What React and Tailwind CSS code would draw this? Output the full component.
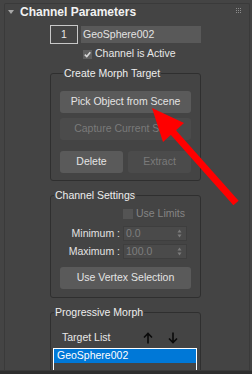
import React from 'react';

// Small shared bits of the 3ds Max style rollout
const Btn = ({ children, disabled, className = '' }) => (
  <div
    className={`h-[22px] rounded-[3px] flex items-center justify-center ${
      disabled ? 'bg-[#4b4b4b] text-[#7a7a7a]' : 'bg-[#5a5a5a] text-[#e4e4e4]'
    } ${className}`}
  >
    {children}
  </div>
);

const Group = ({ label, className = '', children }) => (
  <fieldset className={`border border-[#2f2f2f] rounded-[3px] ${className}`}>
    <legend className="ml-[3px] px-[1px] leading-[14px] text-[#eeeeee]">{label}</legend>
    {children}
  </fieldset>
);

const SpinArrows = () => (
  <svg width="5" height="9" viewBox="0 0 5 9" className="mr-[4px]">
    <path d="M2.5 0.5 L4.5 3.5 H0.5 Z" fill="#7c7c7c" />
    <path d="M2.5 8.5 L4.5 5.5 H0.5 Z" fill="#7c7c7c" />
  </svg>
);

const Spinner = ({ label, value, className = '' }) => (
  <div className={`flex items-center h-[15px] ${className}`}>
    <span className="w-[69px] text-right text-[#e2e2e2]">{label}</span>
    <div className="ml-[3px] w-[64px] h-[15px] bg-[#4a4a4a] border border-[#3e3e3e] flex items-center justify-between">
      <span className="pl-[2px] text-[#7e7e7e]">{value}</span>
      <SpinArrows />
    </div>
  </div>
);

const Grip = () => (
  <svg width="6" height="6" viewBox="0 0 6 6">
    {[0, 2, 4].map((y) =>
      [0, 2, 4].map((x) => <rect key={`${x}-${y}`} x={x} y={y} width="1" height="1" fill="#8c8c8c" />)
    )}
  </svg>
);

export default function App() {
  return (
    <div className="relative w-[252px] h-[374px] bg-[#444444] overflow-hidden flex flex-col font-['Liberation_Sans',Arial,sans-serif] text-[10.5px] text-[#e2e2e2]">
      <div className="flex-1 min-h-0 overflow-hidden pt-[3px]">
        <div className="ml-[4px] w-[246px] h-full border border-b-0 border-[#3a3a3a] rounded-t-[2px]">
          {/* title bar */}
          <div className="h-[15px] flex items-center">
            <svg width="6" height="4" viewBox="0 0 6 4" className="ml-[3px]">
              <path d="M0 0 H6 L3 4 Z" fill="#a8a8a8" />
            </svg>
            <span className="ml-[6px] text-[12px] font-bold text-[#f2f2f2]">Channel Parameters</span>
            <div className="ml-auto mr-[7px] mb-[2px]">
              <Grip />
            </div>
          </div>

          <div className="ml-[45px] w-[151px]">
            {/* channel index + name */}
            <div className="mt-[6px] flex items-center">
              <div className="w-[28px] h-[19px] border border-[#c8c8c8] flex items-center justify-center text-[#e8e8e8]">
                1
              </div>
              <div className="ml-[3px] w-[120px] h-[17px] bg-[#595959] flex items-center pl-[2px] text-[#e4e4e4]">
                GeoSphere002
              </div>
            </div>

            <div className="mt-[5px] h-[10px] flex items-center">
              <div className="ml-[33px] w-[9px] h-[9px] bg-[#5e5e5e] flex items-center justify-center">
                <svg width="7" height="7" viewBox="0 0 7 7">
                  <path d="M0.8 3.6 L2.8 5.6 L6.3 1.2" stroke="#d6d6d6" strokeWidth="1.6" fill="none" />
                </svg>
              </div>
              <span className="ml-[3px] text-[#e8e8e8]">Channel is Active</span>
            </div>

            <Group label="Create Morph Target" className="mt-[7px] px-[9px] pb-[7px]">
              <Btn className="mt-[11px]">Pick Object from Scene</Btn>
              <Btn disabled className="mt-[5px]">Capture Current State</Btn>
              <div className="mt-[11px] grid grid-cols-2 gap-[5px]">
                <Btn>Delete</Btn>
                <Btn disabled>Extract</Btn>
              </div>
            </Group>

            <Group label="Channel Settings" className="mt-[7px] pb-[8px]">
              <div className="mt-[7px] h-[10px] flex items-center">
                <div className="ml-[72px] w-[10px] h-[10px] bg-[#545454]" />
                <span className="ml-[3px] text-[#858585]">Use Limits</span>
              </div>
              <Spinner label="Minimum :" value="0.0" className="mt-[7px]" />
              <Spinner label="Maximum :" value="100.0" className="mt-[3px]" />
              <div className="px-[9px]">
                <Btn className="mt-[8px]">Use Vertex Selection</Btn>
              </div>
            </Group>

            <Group label="Progressive Morph" className="mt-[7px] pb-[10px]">
              <div className="mt-[12px] h-[14px] flex items-center">
                <span className="ml-[11px] text-[#e8e8e8]">Target List</span>
                <svg width="10" height="12" viewBox="0 0 10 12" className="ml-[33px]">
                  <path d="M5 11.5 V1.5 M1 5.5 L5 1.5 L9 5.5" stroke="#0a0a0a" strokeWidth="1.6" fill="none" />
                </svg>
                <svg width="10" height="12" viewBox="0 0 10 12" className="ml-[15px]">
                  <path d="M5 0.5 V10.5 M1 6.5 L5 10.5 L9 6.5" stroke="#0a0a0a" strokeWidth="1.6" fill="none" />
                </svg>
              </div>
              <div className="mt-[3px] ml-[2px] w-[144px] border border-white">
                <div className="h-[14px] bg-[#0078d7] flex items-center pl-[3px] text-white">GeoSphere002</div>
                <div className="h-[24px] bg-[#454545]" />
              </div>
            </Group>
          </div>
        </div>
      </div>
      <div className="h-[4px] bg-[#2e2e2e] border-t border-[#3a3a3a]" />

      {/* red annotation arrow */}
      <svg className="absolute left-0 top-0 pointer-events-none" width="252" height="374" viewBox="0 0 252 374">
        <line x1="236" y1="203" x2="172" y2="131" stroke="#ff0000" strokeWidth="7" />
        <polygon points="152,108 184,123 163,142" fill="#ff0000" />
      </svg>
    </div>
  );
}
